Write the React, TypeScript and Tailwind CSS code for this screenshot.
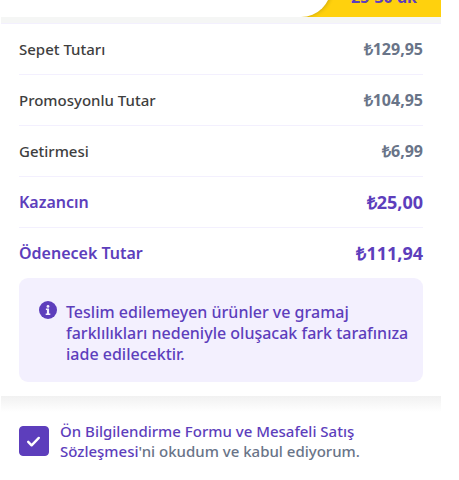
import React from "react";

interface SummaryItem {
  label: string;
  amount: string;
  highlighted?: boolean;
}

const summaryItems: SummaryItem[] = [
  { label: "Sepet Tutarı", amount: "₺129,95" },
  { label: "Promosyonlu Tutar", amount: "₺104,95" },
  { label: "Getirmesi", amount: "₺6,99" },
  { label: "Kazancın", amount: "₺25,00", highlighted: true },
  { label: "Ödenecek Tutar", amount: "₺111,94", highlighted: true },
];

const DeliveryBar: React.FC = () => {
  return (
    <header className="flex h-[17px] items-end overflow-hidden bg-[#ffd10d]">
      <div className="h-14 w-3/4 rounded-br-[30px] bg-white shadow-[1px_0_4px_rgba(0,0,0,0.2)]"></div>
      <div className="flex-grow pb-2 pr-1 text-center text-base font-bold text-[#5d3ebc]">25-30 dk</div>
    </header>
  );
};

const SummaryRow: React.FC<SummaryItem> = ({ label, amount, highlighted }) => {
  return (
    <li className="flex h-[51px] items-center justify-between border-b border-[#f3f0fe] last:h-[50px] last:border-b-0">
      <span className={highlighted ? "text-base font-semibold text-[#5d3ebc]" : "text-[15px] font-medium text-[#3e3e3e]"}>
        {label}
      </span>
      <span
        className={
          highlighted
            ? "font-['Open_Sans',sans-serif] text-lg font-bold text-[#5d3ebc]"
            : "font-['Open_Sans',sans-serif] text-base font-bold text-[#697488]"
        }
      >
        {amount}
      </span>
    </li>
  );
};

const InfoIcon: React.FC = () => {
  return (
    <svg viewBox="0 0 18 18" className="mt-px size-[18px] shrink-0" aria-hidden="true">
      <circle cx="9" cy="9" r="9" fill="#5d3ebc" />
      <circle cx="9" cy="5.4" r="1.4" fill="#f3f0fe" />
      <path d="M6.9 7.6h3.2v4.8h1.2v1.5H6.7v-1.5h1.2V9.1h-1z" fill="#f3f0fe" />
    </svg>
  );
};

const Notice: React.FC = () => {
  return (
    <div className="flex gap-[9px] rounded-[9px] bg-[#f3f0fe] pb-[17px] pl-5 pr-2 pt-[22px] text-[#5d3ebc]">
      <InfoIcon />
      <p className="pt-0.5 text-base/[21px] font-medium">
        Teslim edilemeyen ürünler ve gramaj farklılıkları nedeniyle oluşacak fark tarafınıza iade edilecektir.
      </p>
    </div>
  );
};

const Agreement: React.FC = () => {
  return (
    <div className="flex items-center gap-[11px] bg-linear-to-b from-[#f1f1f1] to-white to-[16px] px-[18px] py-[25px]">
      <div className="relative size-[30px] shrink-0">
        <input
          id="agreement"
          type="checkbox"
          defaultChecked
          className="peer block size-full appearance-none rounded border border-[#5d3ebc] checked:bg-[#5d3ebc]"
        />
        <svg
          viewBox="0 0 30 30"
          className="pointer-events-none absolute inset-0 hidden peer-checked:block"
          fill="none"
          stroke="white"
          strokeWidth="2.4"
          strokeLinecap="round"
          strokeLinejoin="round"
          aria-hidden="true"
        >
          <path d="M9.2 15.8l3.4 3.5 7.2-7.4" />
        </svg>
      </div>
      <label htmlFor="agreement" className="text-[15px]/5 font-medium text-[#697488]">
        <a href="#sozlesme" className="text-[#5d3ebc]">
          Ön Bilgilendirme Formu ve Mesafeli Satış Sözleşmesi
        </a>
        'ni okudum ve kabul ediyorum.
      </label>
    </div>
  );
};

const App: React.FC = () => {
  return (
    <div className="min-h-screen bg-white pl-px pr-[18px] font-['Noto_Sans',sans-serif]">
      <DeliveryBar />
      <div className="h-[7px] border-b border-[#f3f0fe] bg-[#f5f6f5]"></div>
      <main>
        <section className="px-[18px] pb-3.5">
          <ul>
            {summaryItems.map((item) => (
              <SummaryRow key={item.label} {...item} />
            ))}
          </ul>
          <Notice />
        </section>
        <Agreement />
      </main>
    </div>
  );
};

export default App;
